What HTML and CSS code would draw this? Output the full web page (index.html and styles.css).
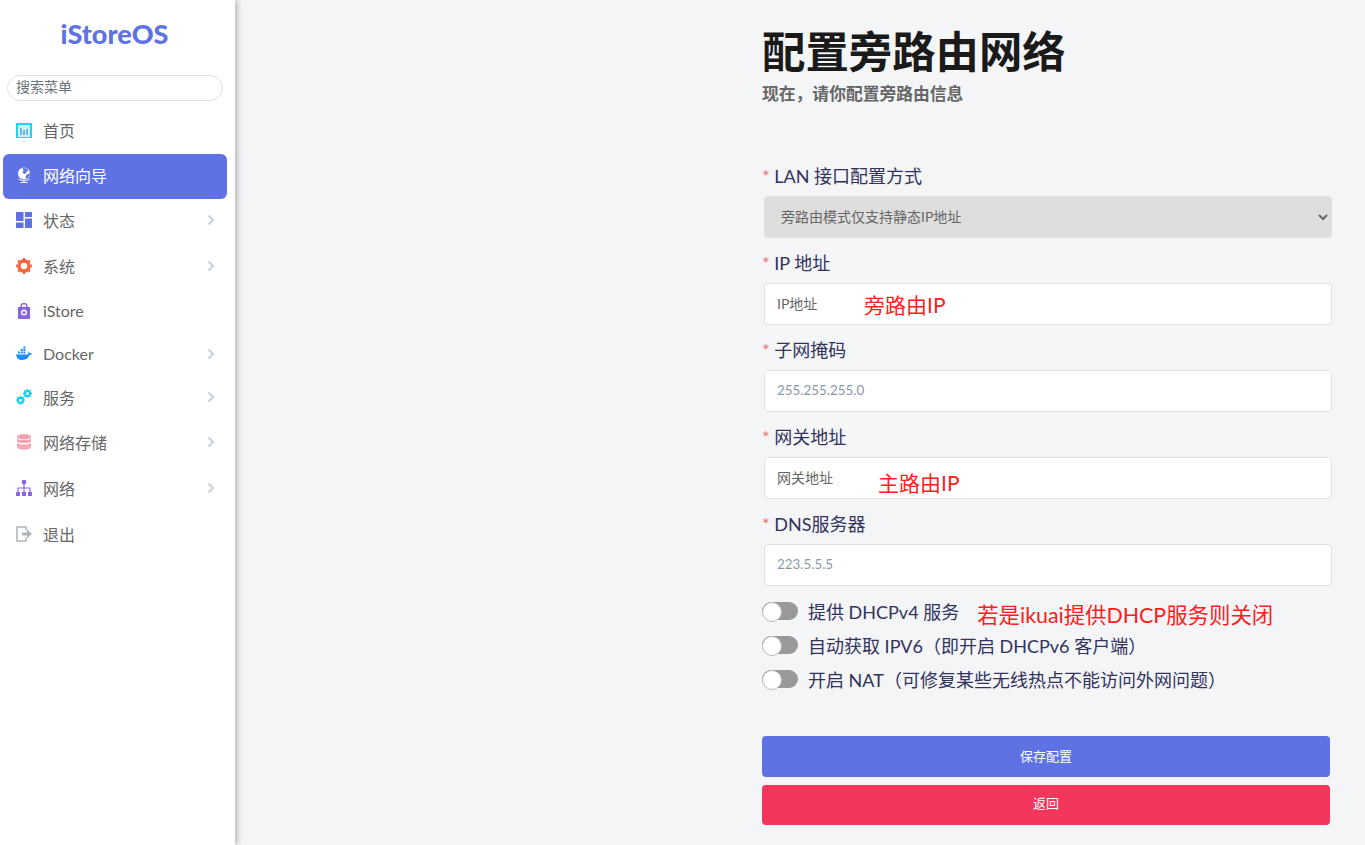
FILE: index.html
```html
<!DOCTYPE html>
<html lang="zh-CN">
<head>
<meta charset="utf-8">
<title>iStoreOS</title>
<link rel="stylesheet" href="styles.css">
</head>
<body>
<div class="app">
  <aside class="sidebar">
    <div class="logo">iStoreOS</div>
    <div class="search"><input class="search-input" type="text" placeholder="搜索菜单"></div>
    <nav class="menu">
      <a class="item h45 lift">
        <svg class="ico" viewBox="0 -1 16 16"><rect x="1" y="1" width="14" height="14" fill="none" stroke="#22d3ee" stroke-width="2"/><rect x="2" y="2" width="12" height="12" fill="#d5eef9"/><path d="M5 5v7M8 7v5M11 6v6" stroke="#3aa6dd" stroke-width="1.4"/></svg>
        <span class="txt">首页</span>
      </a>
      <a class="item active h45 lift">
        <svg class="ico" viewBox="0 0 16 16"><circle cx="8" cy="6.500" r="6" fill="#fff"/><path d="M6.500 1L11 1.500 12.500 3.500 10.500 4.500 10.500 6 8.500 7 6.500 5.500 7.500 3.500zM13.500 6l.4 2L11 11.500 9.500 11 10 8.500z" fill="#5e72e4"/><path d="M2.500 12c3 2 8 2 11 0M8 13.500v1.500M4.500 15.500h7" fill="none" stroke="#fff" stroke-width="1"/></svg>
        <span class="txt">网络向导</span>
      </a>
      <a class="item h45 lift">
        <svg class="ico" viewBox="0 0 16 16"><path d="M0 0h7.500v9H0zM9 0h7v5H9zM9 6.500h7V16H9zM0 10.500h7.500V16H0z" fill="#5e72e4"/></svg>
        <span class="txt">状态</span>
        <svg class="arrow" viewBox="0 0 8 12"><path d="M1.500 1.500L6 6l-4.500 4.500" fill="none" stroke="#ced4da" stroke-width="2.400"/></svg>
      </a>
      <a class="item h46">
        <svg class="ico" viewBox="0 0 16 16"><circle cx="8" cy="8" r="5" fill="none" stroke="#fb6340" stroke-width="3.400"/><path d="M8 0v3M8 13v3M0 8h3M13 8h3M2.300 2.300l2 2M11.700 11.700l2 2M13.700 2.300l-2 2M4.300 11.700l-2 2" stroke="#fb6340" stroke-width="2.400"/></svg>
        <span class="txt">系统</span>
        <svg class="arrow" viewBox="0 0 8 12"><path d="M1.500 1.500L6 6l-4.500 4.500" fill="none" stroke="#ced4da" stroke-width="2.400"/></svg>
      </a>
      <a class="item h43">
        <svg class="ico" viewBox="0 0 16 16"><path d="M2 4h12v12H2z" fill="#8965e0"/><path d="M5 7V3.500a3 3 0 0 1 6 0V7" fill="none" stroke="#8965e0" stroke-width="1.500"/><circle cx="8" cy="9.500" r="3" fill="#fff"/><circle cx="8" cy="9.500" r="1.500" fill="#8965e0"/></svg>
        <span class="txt">iStore</span>
      </a>
      <a class="item h43">
        <svg class="ico" viewBox="0 0 16 16"><path d="M0 8.500h12c.5-1 .3-2 0-3 1 .3 1.500 1 1.700 2 .8-.3 1.600-.3 2.300 0-.5 1.300-1.500 1.600-2.500 1.600C12.300 12.500 10 14 6.500 14 2.500 14 .3 12 0 8.500z" fill="#1d8ff0"/><path d="M2 5.500h2v2H2zM4.700 5.500h2v2h-2zM7.400 5.500h2v2h-2zM4.700 3h2v2h-2zM7.400 3h2v2h-2zM7.400.5h2v2h-2z" fill="#1d8ff0"/></svg>
        <span class="txt">Docker</span>
        <svg class="arrow" viewBox="0 0 8 12"><path d="M1.500 1.500L6 6l-4.500 4.500" fill="none" stroke="#ced4da" stroke-width="2.400"/></svg>
      </a>
      <a class="item h45 lift">
        <svg class="ico" viewBox="0 0 16 16"><g fill="none" stroke="#11cdef"><circle cx="4.500" cy="11.200" r="2.500" stroke-width="2"/><circle cx="11.500" cy="4.500" r="2.500" stroke-width="2"/><path d="M4.500 6.700v9M0 11.200h9M1.300 8l6.400 6.400M7.700 8l-6.400 6.400M11.500 0v9M7 4.500h9M8.300 1.300l6.400 6.400M14.700 1.300L8.300 7.700" stroke-width="1.300" stroke-dasharray="1.700 5.600"/></g></svg>
        <span class="txt">服务</span>
        <svg class="arrow" viewBox="0 0 8 12"><path d="M1.500 1.500L6 6l-4.500 4.500" fill="none" stroke="#ced4da" stroke-width="2.400"/></svg>
      </a>
      <a class="item h46 lift">
        <svg class="ico" viewBox="0 0 16 16"><ellipse cx="8" cy="2.800" rx="7" ry="2.800" fill="#f3a4b5"/><path d="M1 4.500c1.500 2 12.500 2 14 0v3c-1.500 2-12.500 2-14 0zM1 9c1.500 2 12.500 2 14 0v4c-1 3.500-13 3.500-14 0z" fill="#f3a4b5"/></svg>
        <span class="txt">网络存储</span>
        <svg class="arrow" viewBox="0 0 8 12"><path d="M1.500 1.500L6 6l-4.500 4.500" fill="none" stroke="#ced4da" stroke-width="2.400"/></svg>
      </a>
      <a class="item h45 lift">
        <svg class="ico" viewBox="0 0 16 16"><path d="M6 0h4v4H6zM0 12h4v4H0zM6 12h4v4H6zM12 12h4v4h-4z" fill="#8965e0"/><path d="M8 4v8M2 12V8h12v4" fill="none" stroke="#8965e0" stroke-width="1.200"/></svg>
        <span class="txt">网络</span>
        <svg class="arrow" viewBox="0 0 8 12"><path d="M1.500 1.500L6 6l-4.500 4.500" fill="none" stroke="#ced4da" stroke-width="2.400"/></svg>
      </a>
      <a class="item h46">
        <svg class="ico" viewBox="0 0 16 16"><path d="M10 4.500V1H1v14h9v-3.500" fill="none" stroke="#adb5bd" stroke-width="1.500"/><path d="M6 6.500h5V3.500L16 8l-5 4.500v-3H6z" fill="#adb5bd"/></svg>
        <span class="txt">退出</span>
      </a>
    </nav>
  </aside>
  <main class="main">
    <div class="content">
      <h1 class="title">配置旁路由网络</h1>
      <p class="subtitle">现在，请你配置旁路由信息</p>
      <form class="form">
        <div class="field">
          <label class="label"><span class="star">*</span> LAN 接口配置方式</label>
          <select class="control select" disabled><option>旁路由模式仅支持静态IP地址</option></select>
        </div>
        <div class="field">
          <label class="label"><span class="star">*</span> IP 地址</label>
          <div class="control-wrap">
            <input class="control" type="text" placeholder="IP地址">
            <span class="note note-ip">旁路由IP</span>
          </div>
        </div>
        <div class="field">
          <label class="label"><span class="star">*</span> 子网掩码</label>
          <input class="control muted" type="text" placeholder="255.255.255.0">
        </div>
        <div class="field">
          <label class="label"><span class="star">*</span> 网关地址</label>
          <div class="control-wrap">
            <input class="control" type="text" placeholder="网关地址">
            <span class="note note-gw">主路由IP</span>
          </div>
        </div>
        <div class="field">
          <label class="label"><span class="star">*</span> DNS服务器</label>
          <input class="control muted" type="text" placeholder="223.5.5.5">
        </div>
        <div class="toggles">
          <div class="toggle-row"><span class="switch"></span><span class="toggle-text">提供 DHCPv4 服务</span><span class="note-inline">若是ikuai提供DHCP服务则关闭</span></div>
          <div class="toggle-row"><span class="switch"></span><span class="toggle-text">自动获取 IPV6（即开启 DHCPv6 客户端）</span></div>
          <div class="toggle-row"><span class="switch"></span><span class="toggle-text">开启 NAT（可修复某些无线热点不能访问外网问题）</span></div>
        </div>
        <div class="actions">
          <button class="btn primary" type="button">保存配置</button>
          <button class="btn danger" type="button">返回</button>
        </div>
      </form>
    </div>
  </main>
</div>
</body>
</html>
```

FILE: styles.css
```css
* { box-sizing: border-box; }
html, body { margin: 0; height: 100%; }
body {
  font-family: "Lato", "Noto Sans CJK SC", sans-serif;
  background: #f4f5f7;
  overflow: hidden;
}
.app { display: flex; height: 845px; }
.sidebar {
  width: 235px;
  flex: none;
  background: #fff;
  box-shadow: 2px 0 6px rgba(0, 0, 0, .28);
  padding-top: 14px;
}
.logo {
  height: 40px;
  line-height: 40px;
  padding-right: 6px;
  text-align: center;
  font-family: "Lato", sans-serif;
  font-weight: 900;
  font-size: 27px;
  color: #5e72e4;
}
.search { padding: 21px 12px 0 7px; }
.search-input {
  display: block;
  width: 216px;
  height: 26px;
  border: 1px solid #dee2e6;
  border-radius: 13px;
  padding: 0 8px 4px;
  font: 14px "Lato", "Noto Sans CJK SC", sans-serif;
  outline: none;
}
.search-input::placeholder { color: #6c757d; opacity: 1; }
.menu { padding: 8px 8px 0 3px; }
.item {
  display: flex;
  align-items: center;
  width: 224px;
  padding: 0 12px 2px 13px;
  border-radius: 6px;
  color: #666;
  font-size: 16px;
}
.lift { padding-bottom: 4px; }
.h43 { height: 43px; }
.h45 { height: 45px; }
.h46 { height: 46px; }
.active { background: #5e72e4; color: #fff; }
.ico { width: 16px; height: 16px; flex: none; margin-right: 11px; }
.txt { flex: 1; }
.arrow { width: 8px; height: 12px; flex: none; }
.main { flex: 1; padding-left: 527px; }
.content { width: 570px; }
.title {
  margin: 0;
  padding-top: 23px;
  font-size: 43.4px;
  line-height: 56px;
  font-weight: 700;
  color: #1a1a1a;
}
.subtitle {
  margin: 0;
  padding-top: 2px;
  font-size: 16.8px;
  line-height: 25px;
  font-weight: 700;
  color: #666;
}
.form { padding-top: 56px; }
.field { height: 87px; padding-left: 2px; }
.label {
  display: block;
  height: 34px;
  margin-left: -2px;
  line-height: 29px;
  font-size: 18px;
  color: #32325d;
}
.star { color: #f56c6c; }
.control-wrap { position: relative; }
.control {
  display: block;
  width: 568px;
  height: 42px;
  border: 1px solid #dee2e6;
  border-radius: 4px;
  background: #fff;
  padding: 0 12px 2px;
  font: 14px "Lato", "Noto Sans CJK SC", sans-serif;
  outline: none;
}
.control::placeholder { color: #666; opacity: 1; }
.muted { font-size: 13.4px; }
.muted::placeholder { color: #8898aa; }
.select {
  background: #dedede;
  color: #666;
  opacity: 1;
}
.note {
  position: absolute;
  font-size: 21px;
  line-height: 32px;
  color: #fa2020;
}
.note-ip { left: 100px; top: 6px; }
.note-gw { left: 114px; top: 10px; }
.toggles { margin-top: -3px; }
.toggle-row { display: flex; align-items: center; height: 34px; }
.switch {
  position: relative;
  flex: none;
  width: 36px;
  height: 18px;
  border-radius: 9px;
  background: #999;
  margin-right: 10px;
}
.switch::before {
  content: "";
  position: absolute;
  left: 0;
  top: 0;
  width: 18px;
  height: 18px;
  border: 1px solid #bbb;
  border-radius: 50%;
  background: #fff;
}
.toggle-text { font-size: 18px; color: #32325d; }
.note-inline { margin-left: 18px; padding-top: 4px; font-size: 21.4px; color: #fa2020; }
.actions { padding-top: 40px; }
.btn {
  display: block;
  width: 568px;
  border: 0;
  border-radius: 4px;
  color: #fff;
  font: 13px "Lato", "Noto Sans CJK SC", sans-serif;
}
.primary { height: 41px; padding-bottom: 4px; background: #5e72e4; margin-bottom: 8px; }
.danger { height: 40px; padding-bottom: 6px; background: #f5365c; }
```
